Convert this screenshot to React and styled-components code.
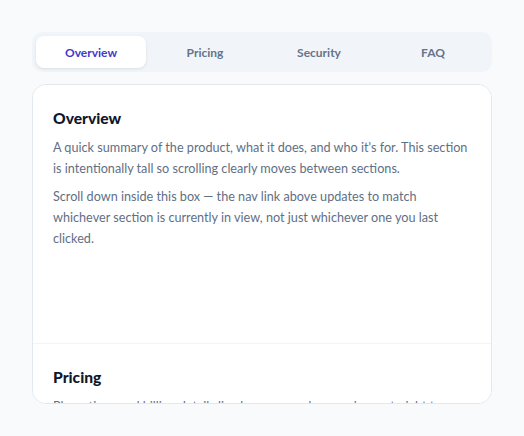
import React, { useState, useRef, useEffect } from "react";
import styled, { createGlobalStyle } from "styled-components";

const Global = createGlobalStyle`
  * { box-sizing: border-box; }
  html, body { margin: 0; padding: 0; background: #f8fafc; }
  body { font-family: "Lato", "Noto Sans", sans-serif; }
`;

const Wrap = styled.div`
  width: 460px;
  margin: 32px auto 0;
  display: flex;
  flex-direction: column;
  gap: 12px;
`;

const Nav = styled.nav`
  display: grid;
  grid-template-columns: repeat(4, 1fr);
  gap: 4px;
  padding: 4px;
  background: #f1f5f9;
  border-radius: 10px;
`;

const Tab = styled.button`
  height: 32px;
  border: none;
  border-radius: 8px;
  font-family: "Lato", sans-serif;
  font-size: 12px;
  font-weight: 700;
  cursor: pointer;
  background: ${(p) => (p.$active ? "#ffffff" : "transparent")};
  color: ${(p) => (p.$active ? "#4338ca" : "#64748b")};
  box-shadow: ${(p) => (p.$active ? "0 1px 3px rgba(15,23,42,0.1)" : "none")};
`;

const Card = styled.div`
  height: 320px;
  overflow-y: auto;
  background: #ffffff;
  border: 1px solid #e2e8f0;
  border-radius: 14px;
  scrollbar-width: none;
  &::-webkit-scrollbar { display: none; }
`;

const Section = styled.section`
  min-height: 259px;
  padding: 20px 20px;
  border-bottom: 1px solid #f1f5f9;
`;

const Heading = styled.h2`
  margin: 0 0 6px;
  font-size: 15.6px;
  line-height: 26px;
  font-weight: 900;
  color: #0f172a;
`;

const Para = styled.p`
  margin: 0 0 7px;
  font-size: 12.65px;
  line-height: 21px;
  color: #5f6f84;
`;

const sections = [
  {
    id: "overview",
    label: "Overview",
    paras: [
      "A quick summary of the product, what it does, and who it's for. This section is intentionally tall so scrolling clearly moves between sections.",
      "Scroll down inside this box — the nav link above updates to match whichever section is currently in view, not just whichever one you last clicked.",
    ],
  },
  {
    id: "pricing",
    label: "Pricing",
    paras: [
      "Plans, tiers, and billing details live here, so readers can jump straight to what it costs without scrolling past everything else.",
    ],
  },
  {
    id: "security",
    label: "Security",
    paras: [
      "How data is stored, encrypted, and protected, along with the compliance standards the product follows.",
    ],
  },
  {
    id: "faq",
    label: "FAQ",
    paras: ["Answers to the questions people ask most often before signing up."],
  },
];

export default function App() {
  const [active, setActive] = useState("overview");
  const cardRef = useRef(null);
  const refs = useRef({});

  useEffect(() => {
    const card = cardRef.current;
    const onScroll = () => {
      const top = card.scrollTop + 10;
      let cur = sections[0].id;
      sections.forEach((s) => {
        const el = refs.current[s.id];
        if (el && el.offsetTop <= top) cur = s.id;
      });
      setActive(cur);
    };
    card.addEventListener("scroll", onScroll);
    return () => card.removeEventListener("scroll", onScroll);
  }, []);

  const go = (id) => {
    const card = cardRef.current;
    const el = refs.current[id];
    card.scrollTo({ top: el.offsetTop, behavior: "smooth" });
    setActive(id);
  };

  return (
    <>
      <Global />
      <Wrap>
        <Nav>
          {sections.map((s) => (
            <Tab key={s.id} $active={active === s.id} onClick={() => go(s.id)}>
              {s.label}
            </Tab>
          ))}
        </Nav>
        <Card ref={cardRef} style={{ position: "relative" }}>
          {sections.map((s) => (
            <Section key={s.id} ref={(el) => (refs.current[s.id] = el)}>
              <Heading>{s.label}</Heading>
              {s.paras.map((p, i) => (
                <Para key={i}>{p}</Para>
              ))}
            </Section>
          ))}
        </Card>
      </Wrap>
    </>
  );
}
